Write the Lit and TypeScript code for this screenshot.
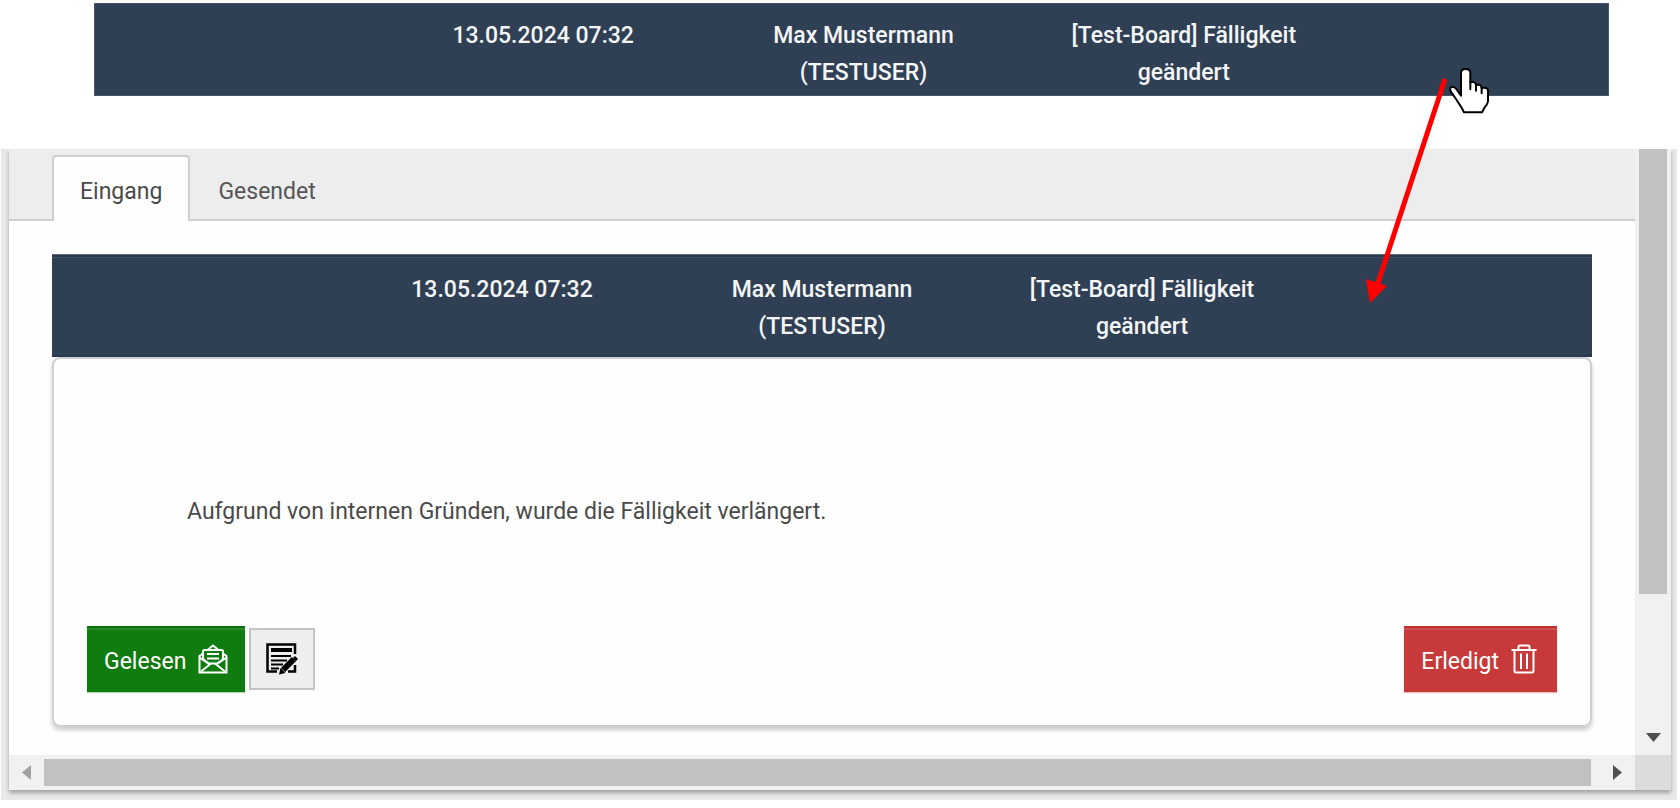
import { LitElement, html, css } from "lit";
import { customElement, property, state } from "lit/decorators.js";

@customElement("message-row")
class MessageRow extends LitElement {
  @property() date = "";
  @property() sender = "";
  @property() subject = "";
  @property({ type: Boolean, reflect: true }) open = false;

  static styles = css`
    :host { display: block; }
    .row {
      box-sizing: border-box;
      display: grid;
      grid-template-columns: repeat(3, minmax(0, 1fr));
      width: 100%;
      margin: 0;
      padding: 13px 264px 4px 288px;
      border: 1px solid #46566a;
      border-radius: 0;
      background: #304054;
      color: #f4f5f6;
      font: 500 23px/37px Roboto, "Liberation Sans", sans-serif;
      text-align: center;
      cursor: pointer;
      align-items: start;
    }
    .cell { padding: 0 38px; }
    :host([open]) .row {
      padding: 16px 290px 12px;
      border-width: 1px 0 0;
      border-color: #5b6979;
      box-shadow: inset 0 2px #2b3a4d, inset 0 3px #425469, inset 0 -2px #29384b;
    }
  `;

  render() {
    return html`<button class="row" type="button" aria-expanded=${this.open ? "true" : "false"}>
      <span class="cell">${this.date}</span>
      <span class="cell">${this.sender}</span>
      <span class="cell">${this.subject}</span>
    </button>`;
  }
}

@customElement("app-root")
class AppRoot extends LitElement {
  @state() tab = "Eingang";

  static styles = css`
    :host {
      display: block;
      position: relative;
      padding: 3px 3px 7px 1px;
      background: #fff;
      color: #4a4a4a;
      font: 400 23px/37px Roboto, "Liberation Sans", sans-serif;
    }
    .preview { margin: 0 68px 53px 93px; }
    .frame { padding: 0 6px 10px 8px; background: #e9e9e9; }
    .window {
      display: grid;
      grid-template-columns: minmax(0, 1fr) 36px;
      grid-template-rows: auto 35px;
      background: #fefefe;
      box-shadow: 0 3px 4px rgba(0, 0, 0, 0.3);
    }
    .tabs {
      display: flex;
      height: 72px;
      box-sizing: border-box;
      padding: 6px 43px 0;
      background: #ededed;
      box-shadow: inset 0 -2px #cfcfcf;
    }
    .tab {
      box-sizing: border-box;
      padding: 4px 26px 0;
      border: 2px solid transparent;
      border-bottom: 0;
      border-radius: 4px 4px 0 0;
      background: none;
      color: #555;
      font: inherit;
      cursor: pointer;
    }
    .tab[aria-selected="true"] {
      border-color: #cfcfcf;
      background: #fefefe;
      color: #4a4a4a;
    }
    .content { padding: 33px 43px 28px; }
    .card {
      display: flex;
      flex-direction: column;
      padding: 134px 33px 33px;
      border: 2px solid #cfcfcf;
      border-radius: 8px;
      box-shadow: 0 3px 4px rgba(0, 0, 0, 0.2);
    }
    .text { margin: 0 0 96px; padding: 0 100px; }
    .actions { display: flex; align-items: center; gap: 4px; }
    .btn {
      display: flex;
      align-items: center;
      box-sizing: border-box;
      height: 66px;
      gap: 12px;
      padding: 4px 17px 0;
      border: 0;
      border-radius: 0;
      color: #fff;
      font: inherit;
      cursor: pointer;
    }
    .btn svg { margin-bottom: 4px; }
    .read { background: #107c10; box-shadow: inset 0 2px #0d6f0d, inset 0 4px #288928, 0 1px 1px #b5d5b5; }
    .done { margin-left: auto; padding-right: 20px; background: #c83a3a; box-shadow: inset 0 2px #bf3131, inset 0 4px #ce4d4d, 0 1px 1px #e9b9b9; }
    .edit {
      display: grid;
      place-items: center;
      width: 66px;
      height: 62px;
      padding: 0;
      border: 2px solid #c4c4c4;
      background: #eee;
      color: #000;
      cursor: pointer;
    }
    .vbar {
      display: flex;
      flex-direction: column;
      justify-content: space-between;
      align-items: center;
      background: #f1f1f1;
    }
    .vbar .thumb { width: 28px; height: 445px; background: #c1c1c1; }
    .hbar { display: flex; align-items: center; background: #f1f1f1; }
    .hbar .thumb { flex: 1; height: 27px; background: #c1c1c1; }
    .arrow {
      display: grid;
      place-items: center;
      width: 35px;
      height: 35px;
      padding: 0;
      border: 0;
      background: none;
      color: #505050;
    }
    .hbar .arrow:last-child { width: 44px; padding-left: 8px; }
    .arrow:disabled { color: #a3a3a3; }
    .corner { background: #dcdcdc; }
    svg { display: block; }
    .pointer { position: absolute; top: 67px; right: 190px; }
    .trail { position: absolute; top: 74px; right: 230px; }
  `;

  renderTab(name: string) {
    return html`<button
      class="tab" type="button" role="tab"
      aria-selected=${this.tab === name ? "true" : "false"}
      @click=${() => (this.tab = name)}
    >${name}</button>`;
  }

  render() {
    return html`
      <message-row class="preview" date="13.05.2024 07:32" sender="Max Mustermann (TESTUSER)"
        subject="[Test-Board] Fälligkeit geändert"></message-row>
      <div class="frame">
        <div class="window">
          <main>
            <div class="tabs" role="tablist">${this.renderTab("Eingang")}${this.renderTab("Gesendet")}</div>
            <div class="content">
              <message-row open date="13.05.2024 07:32" sender="Max Mustermann (TESTUSER)"
                subject="[Test-Board] Fälligkeit geändert"></message-row>
              <article class="card">
                <p class="text">Aufgrund von internen Gründen, wurde die Fälligkeit verlängert.</p>
                <div class="actions">
                  <button class="btn read" type="button">Gelesen
                    <svg width="30" height="30" viewBox="0 0 30 30" fill="none" stroke="currentColor" stroke-width="2">
                      <path d="M5 9.500 L1.500 12 V28.500 H28.500 V12 L25 9.500"/>
                      <path d="M10 5.500 L15 1.500 L20 5.500"/>
                      <path d="M11 19.500 L6 16 Q5 15 5 13.500 V7.500 Q5 6 6.500 6 H23.500 Q25 6 25 7.500 V13.500 Q25 15 24 16 L19 19.500 Z"/>
                      <path d="M9 10 H21 M9 14.500 H21"/>
                      <path d="M1.500 13.500 L11 20 M28.500 13.500 L19 20 M3 27.500 L13 19.500 M27 27.500 L17 19.500"/>
                    </svg>
                  </button>
                  <button class="edit" type="button" aria-label="Bearbeiten">
                    <svg width="32" height="32" viewBox="0 0 32 32" fill="none" stroke="currentColor">
                      <path d="M29 11 V1.500 H1.500 V28.500 H11" stroke-width="2.500"/>
                      <path d="M5 7 H26" stroke-width="4"/>
                      <path d="M5 13 H25 M5 17.500 H21 M5 21.500 H17 M5 25.500 H13" stroke-width="2"/>
                      <path d="M17 27 L28 16" stroke-width="6"/>
                      <path d="M13 31.500 L14.500 25 L19.500 30 Z M27 15 L29 13 L32 16 L30 18 Z" fill="currentColor" stroke="none"/>
                      <path d="M22 28.500 H29 V22" stroke-width="2.500"/>
                    </svg>
                  </button>
                  <button class="btn done" type="button">Erledigt
                    <svg width="26" height="30" viewBox="0 0 26 30" fill="none" stroke="currentColor" stroke-width="2">
                      <path d="M0.500 6 H25.500 M7.500 6 V2.500 Q7.500 1.500 8.500 1.500 H17.500 Q18.500 1.500 18.500 2.500 V6"/>
                      <path d="M3.500 6 V27 Q3.500 28.500 5 28.500 H21 Q22.500 28.500 22.500 27 V6 M10 9.500 V25 M16 9.500 V25"/>
                    </svg>
                  </button>
                </div>
              </article>
            </div>
          </main>
          <div class="vbar">
            <div class="thumb"></div>
            <button class="arrow" type="button" aria-label="Nach unten">
              <svg width="15" height="9" viewBox="0 0 15 9"><path d="M0 0H15L7.500 9Z" fill="currentColor"/></svg>
            </button>
          </div>
          <div class="hbar">
            <button class="arrow" type="button" aria-label="Nach links" disabled>
              <svg width="9" height="15" viewBox="0 0 9 15"><path d="M9 0V15L0 7.500Z" fill="currentColor"/></svg>
            </button>
            <div class="thumb"></div>
            <button class="arrow" type="button" aria-label="Nach rechts">
              <svg width="9" height="15" viewBox="0 0 9 15"><path d="M0 0V15L9 7.500Z" fill="currentColor"/></svg>
            </button>
          </div>
          <div class="corner"></div>
        </div>
      </div>
      <svg class="trail" width="90" height="232" viewBox="0 0 90 232" aria-hidden="true">
        <path d="M85 5 L17 212" stroke="#f00" stroke-width="5"/>
        <path d="M6 205 L27 212 L10 229 Z" fill="#f00"/>
      </svg>
      <svg class="pointer" width="42" height="48" viewBox="264 51 126 144" aria-hidden="true">
        <path d="M303 137 V70 Q303 57 317 57 Q331 57 331 70 V97 Q347 93 348 105 Q364 101 365 114 Q384 110 384 124 V154 Q382 164 374 172 L366 187 H312 L304 172 L290 150 L274 127 Q267 117 273 112 Q280 107 289 117 Z"
          fill="#fff" stroke="#000" stroke-width="6" stroke-linejoin="round"/>
        <path d="M331 95 V118 M348 103 V122 M365 112 V130" stroke="#000" stroke-width="6" stroke-linecap="round"/>
      </svg>
    `;
  }
}
